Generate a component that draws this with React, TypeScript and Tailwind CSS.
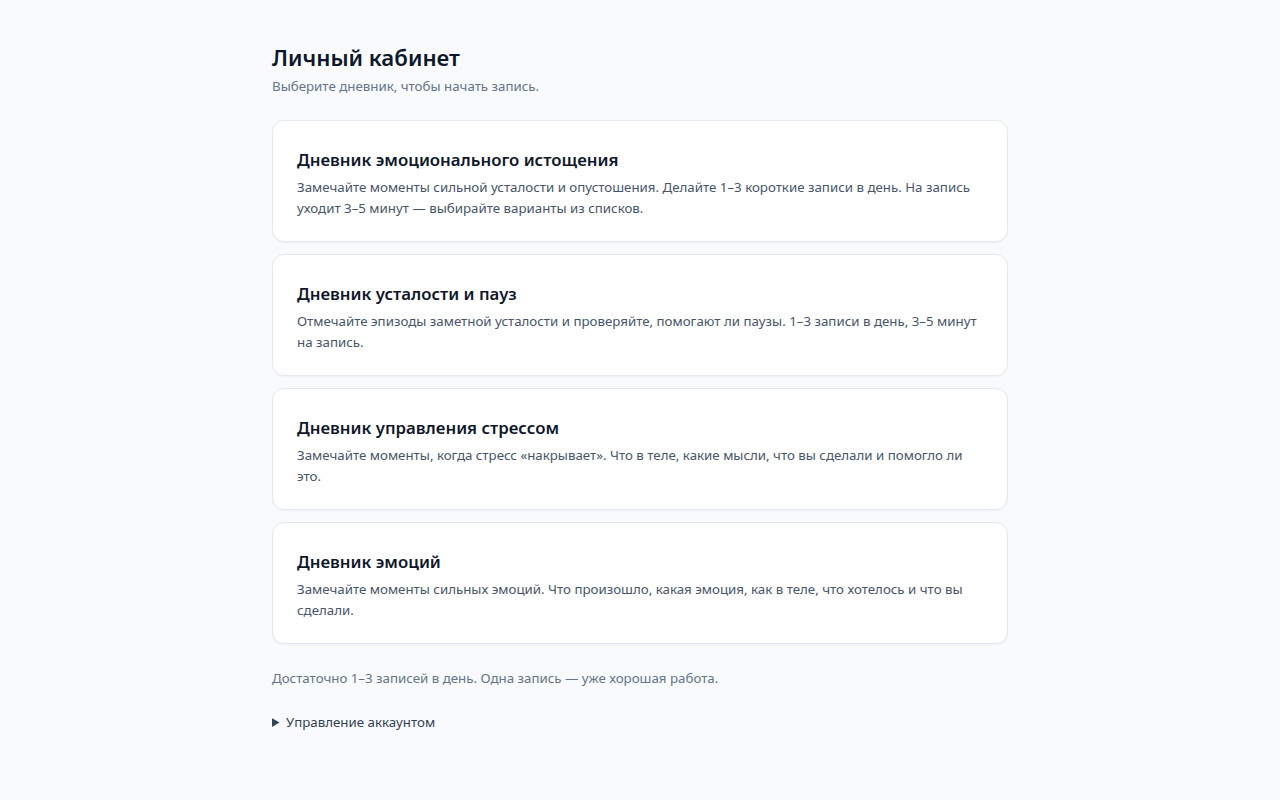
const diaries = [
  {
    title: "Дневник эмоционального истощения",
    text: "Замечайте моменты сильной усталости и опустошения. Делайте 1–3 короткие записи в день. На запись уходит 3–5 минут — выбирайте варианты из списков.",
  },
  {
    title: "Дневник усталости и пауз",
    text: "Отмечайте эпизоды заметной усталости и проверяйте, помогают ли паузы. 1–3 записи в день, 3–5 минут на запись.",
  },
  {
    title: "Дневник управления стрессом",
    text: "Замечайте моменты, когда стресс «накрывает». Что в теле, какие мысли, что вы сделали и помогло ли это.",
  },
  {
    title: "Дневник эмоций",
    text: "Замечайте моменты сильных эмоций. Что произошло, какая эмоция, как в теле, что хотелось и что вы сделали.",
  },
];

export default function App() {
  return (
    <div className="min-h-screen bg-[#f8fafc] font-['Noto_Sans',sans-serif] text-[#0f172a]">
      <main className="mx-auto w-[736px] pt-[42px] pb-16">
        <h1 className="text-[22.2px] font-semibold leading-8">Личный кабинет</h1>
        <p className="mt-[3px] text-[13.3px] leading-[18px] text-[#64748b]">
          Выберите дневник, чтобы начать запись.
        </p>

        <div className="mt-[25px] flex flex-col gap-3">
          {diaries.map((d) => (
            <a
              key={d.title}
              href="#"
              className="block rounded-xl border border-[#e2e8f0] bg-white pl-6 pr-[30px] pt-[27px] pb-[22px] shadow-[0_1px_2px_rgba(15,23,42,0.04)]"
            >
              <h2 className="text-[16.8px] font-semibold leading-6 text-[#0f172a]">{d.title}</h2>
              <p className="mt-[5px] text-[13.3px] leading-[21px] text-[#475569]">{d.text}</p>
            </a>
          ))}
        </div>

        <p className="mt-[24px] text-[13.3px] leading-[20px] text-[#64748b]">
          Достаточно 1–3 записей в день. Одна запись — уже хорошая работа.
        </p>

        <details className="mt-[24px]">
          <summary className="cursor-pointer text-[13.3px] leading-[20px] text-[#334155]">
            Управление аккаунтом
          </summary>
        </details>
      </main>
    </div>
  );
}
